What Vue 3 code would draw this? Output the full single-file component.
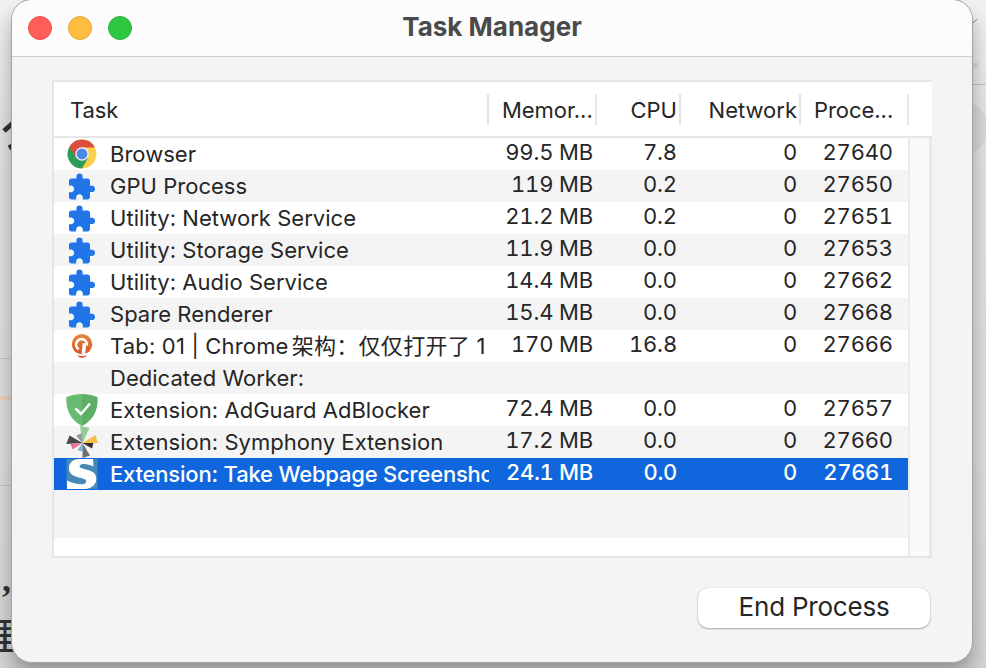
<script setup>
const columns = [
  { key: 'memory', label: 'Memor...' },
  { key: 'cpu', label: 'CPU' },
  { key: 'network', label: 'Network' },
  { key: 'pid', label: 'Proce...' },
]

const tasks = [
  { icon: 'chrome', name: 'Browser', memory: '99.5 MB', cpu: '7.8', network: '0', pid: '27640' },
  { icon: 'puzzle', name: 'GPU Process', memory: '119 MB', cpu: '0.2', network: '0', pid: '27650' },
  { icon: 'puzzle', name: 'Utility: Network Service', memory: '21.2 MB', cpu: '0.2', network: '0', pid: '27651' },
  { icon: 'puzzle', name: 'Utility: Storage Service', memory: '11.9 MB', cpu: '0.0', network: '0', pid: '27653' },
  { icon: 'puzzle', name: 'Utility: Audio Service', memory: '14.4 MB', cpu: '0.0', network: '0', pid: '27662' },
  { icon: 'puzzle', name: 'Spare Renderer', memory: '15.4 MB', cpu: '0.0', network: '0', pid: '27668' },
  { icon: 'geek', name: 'Tab: 01 | Chrome', title: '架构：仅仅打开了 1', memory: '170 MB', cpu: '16.8', network: '0', pid: '27666' },
  { icon: '', name: 'Dedicated Worker:', memory: '', cpu: '', network: '', pid: '' },
  { icon: 'shield', name: 'Extension: AdGuard AdBlocker', memory: '72.4 MB', cpu: '0.0', network: '0', pid: '27657' },
  { icon: 'pinwheel', name: 'Extension: Symphony Extension', memory: '17.2 MB', cpu: '0.0', network: '0', pid: '27660' },
  { icon: 'shot', name: 'Extension: Take Webpage Screensho', memory: '24.1 MB', cpu: '0.0', network: '0', pid: '27661', selected: true },
]
</script>

<template>
  <div class="desktop">
    <svg class="strokes" viewBox="0 0 14 40" aria-hidden="true">
      <path d="M4 17 14 8M9 34l5-3" fill="none" stroke="#333" stroke-width="5" />
    </svg>
    <span class="behind comma">,</span>
    <span class="behind glyph">理</span>
    <i class="rule r1"></i><i class="rule r2"></i><i class="rule r3"></i><i class="rule r4"></i>
    <i class="rule r5"></i><i class="bubble"></i>
    <svg class="tick" viewBox="0 0 6 7" aria-hidden="true"><path d="M0 6 5 1" fill="none" stroke="#888" /></svg>

    <main class="window">
      <header class="titlebar">
        <div class="lights"><i class="red"></i><i class="yellow"></i><i class="green"></i></div>
        <h1>Task Manager</h1>
      </header>

      <section class="table">
        <div class="head">
          <div class="cell task">Task</div>
          <div v-for="c in columns" :key="c.key" class="cell" :class="c.key">{{ c.label }}</div>
        </div>
        <div class="body">
          <div class="rows">
            <div v-for="t in tasks" :key="t.name" class="row" :class="{ selected: t.selected, titled: t.title }">
              <div class="name">
                <svg class="icon" v-if="t.icon === 'chrome'" viewBox="0 0 32 32">
                  <circle cx="16" cy="16" r="14.4" fill="#fbd04f" />
                  <path d="M16 16 3.5 8.8A14.4 14.4 0 0 0 16 30.4L22.2 19.6Z" fill="#2a9d5c" />
                  <path d="M3.5 8.8A14.4 14.4 0 0 1 28.5 8.8L28.6 9.6H16L9.8 19.6Z" fill="#db4f43" />
                  <circle cx="16" cy="16" r="6.7" fill="#f4f4f4" />
                  <circle cx="16" cy="16" r="5.4" fill="#4b88ee" />
                </svg>
                <svg class="icon" v-else-if="t.icon === 'puzzle'" viewBox="-0.4 -1.8 25.85 25.85">
                  <path fill="#2076e8" d="M20.5 11H19V7c0-1.1-.9-2-2-2h-4V3.5a2.5 2.5 0 0 0-5 0V5H4c-1.1 0-1.99.9-1.99 2v3.8H3.5c1.49 0 2.7 1.21 2.7 2.7s-1.21 2.7-2.7 2.7H2V20c0 1.1.9 2 2 2h3.8v-1.5c0-1.49 1.21-2.7 2.7-2.7 1.49 0 2.7 1.21 2.7 2.7V22H17c1.1 0 2-.9 2-2v-4h1.5a2.5 2.5 0 0 0 0-5z" />
                </svg>
                <svg class="icon" v-else-if="t.icon === 'geek'" viewBox="0 0 32 32">
                  <defs>
                    <linearGradient id="ember" x1="0" y1="0" x2="0" y2="1">
                      <stop offset="0" stop-color="#e48a3c" /><stop offset="1" stop-color="#d9552a" />
                    </linearGradient>
                  </defs>
                  <circle cx="16" cy="14.2" r="10.2" fill="url(#ember)" />
                  <path d="M12.800 19.200A5.400 5.400 0 1 1 20.800 15.500" fill="none" stroke="#fff" stroke-width="2.600" />
                  <path d="M16.800 13 20.300 13.500 19.200 24.500H15.500Z" fill="#fff" />
                  <path d="M9.500 24.600H22.500V23L16 24.200 9.500 23Z" fill="#fff" />
                  <path d="M11.200 25.200Q16 26.800 20.800 25.200 19 28 16 28T11.200 25.200Z" fill="#d9552a" />
                </svg>
                <svg class="icon" v-else-if="t.icon === 'shield'" viewBox="0 0 32 32">
                  <path d="M16 0C10.8 0 5 1 .3 3.2.3 10 .3 23.5 16 32Z" fill="#68bc71" />
                  <path d="M16 0C21.2 0 27 1 31.7 3.2 31.7 10 31.7 23.5 16 32Z" fill="#5fae68" />
                  <path d="M9.500 14.500 15 20 24 9.500" fill="none" stroke="#fff" stroke-width="2.500" />
                </svg>
                <svg class="icon" v-else-if="t.icon === 'pinwheel'" viewBox="0 0 32 32">
                  <path d="M16.500 17 14 0 23.500 2Z" fill="#8fcf93" />
                  <path d="M16.500 17 10 9.800 16 7Z" fill="#999" />
                  <path d="M16.500 17 3.500 9.500 .3 18Z" fill="#484848" />
                  <path d="M16.500 17 4.500 18 6.500 23.500Z" fill="#ee7194" />
                  <path d="M16.500 17 11.500 24 16 25.500Z" fill="#70b5e0" />
                  <path d="M16.500 17 16.500 32 24 29.500Z" fill="#717171" />
                  <path d="M16.500 17 26 22.500 27.500 16.500Z" fill="#333" />
                  <path d="M16.500 17 29.500 9 31.700 17Z" fill="#f4bf45" />
                </svg>
                <svg class="icon" v-else-if="t.icon === 'shot'" viewBox="0 0 32 32">
                  <path d="M.7 1H31.5V31H.7Z" fill="#4589b8" />
                  <path d="M.7 5V25.500L20 22.500Q19.500 20.500 14 19.500C6 18 2.500 15 3 9.500 3.300 5 6 2 10 1H.7Z" fill="#4589b8" />
                  <path d="M27 1H14C6 1 2.500 5.500 3 11 3.500 18 10 18.500 15 20 19 21.200 21 22 20 24.500 18 28 8 26 1 22.500V31H19C26 30.500 30.500 26.500 30.300 20.500 30 13.500 24 12.500 19 11.200 15 10.200 13 9.500 13.700 7.800 15 4.800 22 6 27.500 8.500Z" fill="#fff" />
                </svg>
                <span v-else class="icon"></span>
                <span class="label">{{ t.name }}<span v-if="t.title" class="cjk">{{ t.title }}</span></span>
              </div>
              <div v-for="c in columns" :key="c.key" class="num" :class="c.key">{{ t[c.key] }}</div>
            </div>
            <div class="rest"></div>
          </div>
          <div class="track"></div>
        </div>
      </section>

      <footer><button type="button">End Process</button></footer>
    </main>
  </div>
</template>

<style>
body { margin: 0; overflow: hidden; }
</style>

<style scoped>
* { box-sizing: border-box; }
.desktop {
  position: relative; width: 986px; height: 668px; padding: 0 14px 6px 12px; overflow: hidden;
  background: linear-gradient(#f2f2f2, #e2e2e2 130px, #dcdcdc 500px, #d4d4d4);
  font-family: Inter, "Noto Sans CJK SC", sans-serif; color: #262626;
}
.window {
  position: relative; display: flex; flex-direction: column; width: 960px; height: 662px;
  background: #f4f4f4; border-radius: 20px; overflow: hidden;
  box-shadow: 0 0 0 1px #a4a4a4, 0 12px 20px rgba(0, 0, 0, .32);
}
.titlebar {
  display: grid; grid-template-columns: 1fr auto 1fr; align-items: center; height: 57px;
  padding: 0 16px; background: #fcfcfc; border-bottom: 1px solid #cfcfcf;
}
.lights { display: flex; gap: 16px; }
.lights i { width: 24px; height: 24px; border-radius: 50%; }
.red { background: #ff5f58; border: 1px solid #e7514b; }
.yellow { background: #ffbd40; border: 1px solid #e5a63a; }
.green { background: #2ec840; border: 1px solid #2bb338; }
h1 { margin: 0; padding-bottom: 2px; font-size: 26px; font-weight: 700; line-height: 32px; color: #4a4a4a; }
.table {
  display: flex; flex-direction: column; width: 880px; height: 478px; margin: 23px 0 0 40px;
  border: 2px solid #e6e6e6; border-right: 0;
}
.head { display: grid; grid-template-columns: 435px 108px 84px 120px 108px; height: 54px; padding-top: 12px; background: #fff; }
.cell { height: 31px; line-height: 33px; border-right: 2px solid #e6e6e6; font-size: 22px; text-align: right; white-space: nowrap; padding-right: 2px; }
.cell.task { text-align: left; padding-left: 16px; letter-spacing: -.1px; }
.cell.memory, .cell.pid { text-align: left; padding-left: 13px; letter-spacing: -.05px; }
.body { flex: 1; display: flex; border-top: 2px solid #e6e6e6; }
.rows { flex: 1; display: flex; flex-direction: column; background: #fff; }
.row { display: grid; grid-template-columns: 435px 104px 84px 120px 96px; height: 32px; line-height: 32px; font-size: 22px; }
.row:nth-child(even) { background: #f4f4f4; }
.name { display: flex; gap: 12px; padding-left: 12px; overflow: hidden; white-space: nowrap; letter-spacing: .03px; }
.titled .name { letter-spacing: .18px; }
.cjk { margin-left: 3px; letter-spacing: .3px; }
.icon { flex: none; width: 32px; height: 32px; }
.label { overflow: hidden; }
.num { text-align: right; line-height: 29px; white-space: nowrap; letter-spacing: -.15px; font-variant-numeric: tabular-nums; }
.row.selected { background: #1067dd; color: #fff; font-weight: 500; }
.selected .name { letter-spacing: -.2px; }
.selected .num { letter-spacing: -.3px; }
.rest { height: 48px; background: #f4f4f4; }
.track { width: 24px; background: #fafafa; border-left: 2px solid #ebebeb; border-right: 3px solid #e8e8e8; }
footer { display: flex; justify-content: flex-end; padding: 30px 42px 0 0; }
button {
  width: 232px; height: 40px; border: 0; border-radius: 10px; padding: 0 0 2px; background: #fff; color: #262626;
  font: 26px/38px Inter, sans-serif; letter-spacing: -.22px; box-shadow: 0 0 1px rgba(0, 0, 0, .25), 0 1px 2px rgba(0, 0, 0, .3);
}
.behind { position: absolute; color: #333; white-space: nowrap; }
.comma { left: 2px; top: 561px; font: 700 36px/36px "Liberation Serif", serif; }
.glyph { left: -19px; top: 612px; font: 500 36px/44px "Noto Sans CJK SC", sans-serif; }
.strokes { position: absolute; left: 0; top: 114px; width: 14px; height: 40px; }
.rule { position: absolute; height: 1px; background: #c4c4c4; }
.r1 { left: 0; top: 358px; width: 12px; }
.r2 { left: 0; top: 396px; width: 12px; height: 4px; background: #ecd0bc; }
.r3 { left: 0; top: 485px; width: 12px; }
.r4 { left: 972px; top: 63px; width: 6px; height: 5px; background: #f0d2ba; }
.r5 { left: 972px; top: 84px; width: 14px; }
.bubble { position: absolute; left: 944px; top: 104px; width: 42px; height: 48px; border-radius: 40%; background: #d6d9db; }
.tick { position: absolute; left: 972px; top: 18px; width: 6px; height: 7px; }
</style>
